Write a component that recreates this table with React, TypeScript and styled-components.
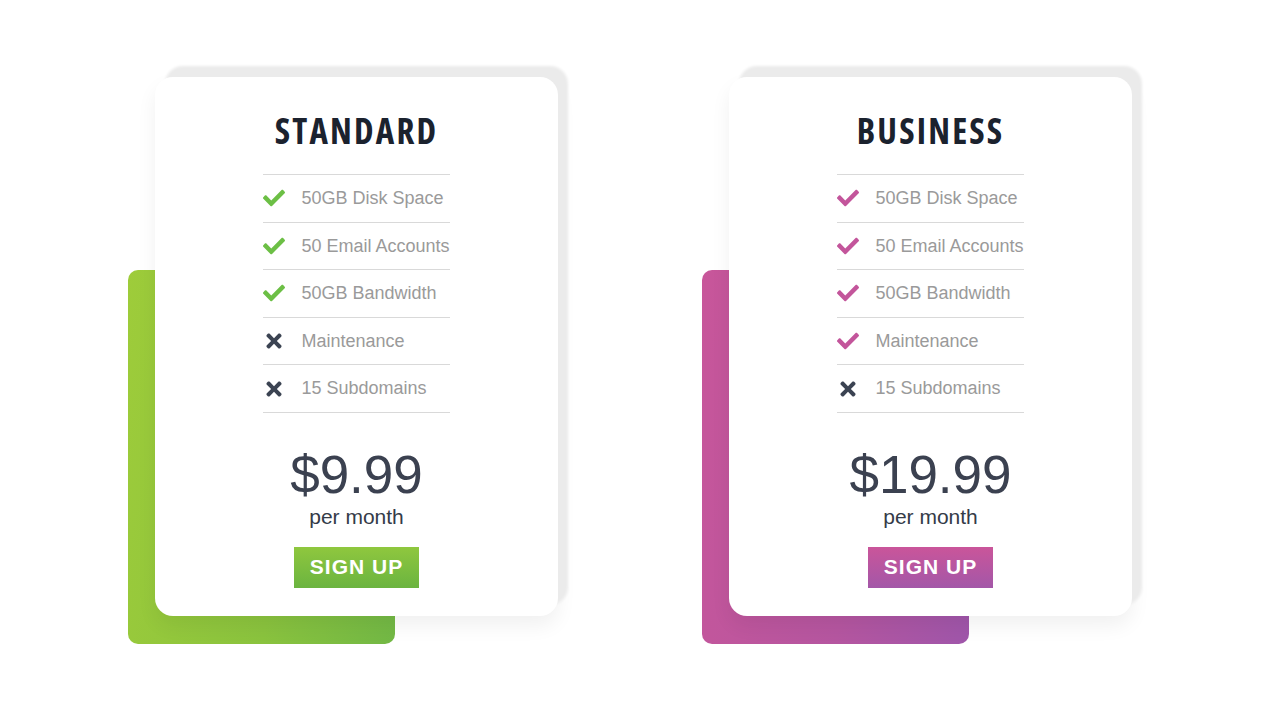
import React from 'react';
import styled, { createGlobalStyle } from 'styled-components';
import { FaCheck, FaTimes } from 'react-icons/fa';

type Theme = {
  accent: string;
  button: string;
  check: string;
};

const themes: Record<string, Theme> = {
  green: {
    accent: 'linear-gradient(100deg, #9ecc3a 0%, #8ac33e 60%, #72b845 100%)',
    button: 'linear-gradient(to bottom, #8fc73e, #6bb440)',
    check: '#6cbf45',
  },
  pink: {
    accent: 'linear-gradient(100deg, #c8569a 0%, #b556a0 60%, #9f56aa 100%)',
    button: 'linear-gradient(to bottom, #ca559a, #a357a8)',
    check: '#c3559b',
  },
};

const plans = [
  {
    name: 'STANDARD',
    price: '$9.99',
    theme: themes.green,
    features: [
      { label: '50GB Disk Space', on: true },
      { label: '50 Email Accounts', on: true },
      { label: '50GB Bandwidth', on: true },
      { label: 'Maintenance', on: false },
      { label: '15 Subdomains', on: false },
    ],
  },
  {
    name: 'BUSINESS',
    price: '$19.99',
    theme: themes.pink,
    features: [
      { label: '50GB Disk Space', on: true },
      { label: '50 Email Accounts', on: true },
      { label: '50GB Bandwidth', on: true },
      { label: 'Maintenance', on: true },
      { label: '15 Subdomains', on: false },
    ],
  },
];

const App = () => {
  return (
    <>
      <GlobalStyle />
      <Page>
        {plans.map((plan) => (
          <Plan key={plan.name}>
            <Accent $bg={plan.theme.accent} />
            <Card>
              <Title>{plan.name}</Title>
              <Features>
                {plan.features.map((f) => (
                  <Feature key={f.label}>
                    <Mark $color={f.on ? plan.theme.check : '#3b4352'}>
                      {f.on ? <FaCheck size={22} /> : <FaTimes size={22} />}
                    </Mark>
                    {f.label}
                  </Feature>
                ))}
              </Features>
              <Price>{plan.price}</Price>
              <Period>per month</Period>
              <SignUp $bg={plan.theme.button}>SIGN UP</SignUp>
            </Card>
          </Plan>
        ))}
      </Page>
    </>
  );
};

export default App;

const GlobalStyle = createGlobalStyle`
  html, body {
    margin: 0;
    background: #fff;
  }
  body {
    font-family: 'Liberation Sans', Arial, sans-serif;
  }
`;

const card = {
  width: 403,
  radius: 18,
};

const Page = styled.main`
  display: flex;
  align-items: flex-start;
  gap: 171px;

  width: 1280px;
  height: 720px;
  padding: 77px 0 0 155px;
  box-sizing: border-box;
`;

const Plan = styled.section`
  position: relative;
  isolation: isolate;

  width: ${card.width}px;
`;

const Accent = styled.div<{ $bg: string }>`
  position: absolute;
  left: -27px;
  top: 193px;
  z-index: -1;

  width: 267px;
  height: 374px;

  border-radius: 10px;
  background: ${(p) => p.$bg};
`;

const Card = styled.div`
  display: flex;
  flex-direction: column;
  align-items: center;

  padding: 34px 0 28px;

  border-radius: ${card.radius}px;
  background: #fff;
  box-shadow:
    10px -11px 3px #ebebeb,
    0 10px 20px rgba(0, 0, 0, 0.06);
`;

const Title = styled.h2`
  margin: 0 0 23px;

  font-family: 'Open Sans', 'Noto Sans', sans-serif;
  font-size: 35px;
  font-weight: 700;
  font-stretch: 80%;
  line-height: 40px;
  letter-spacing: 2.2px;

  color: #1b222e;
`;

const Features = styled.ul`
  margin: 0;
  padding: 0;

  list-style: none;
  border-top: 1px solid #d9d9d9;
`;

const Feature = styled.li`
  display: flex;
  align-items: center;

  padding: 12px 0;

  font-size: 18px;
  line-height: 22.6px;
  color: #9a9a9a;

  border-bottom: 1px solid #d9d9d9;
`;

const Mark = styled.span<{ $color: string }>`
  display: flex;
  align-items: center;

  width: 38px;

  color: ${(p) => p.$color};
`;

const Price = styled.div`
  margin-top: 37.5px;

  font-size: 53px;
  line-height: 50px;
  color: #3b4150;
`;

const Period = styled.div`
  margin-top: 5.5px;

  font-size: 21px;
  line-height: 21px;
  color: #343b48;
`;

const SignUp = styled.button<{ $bg: string }>`
  margin-top: 20px;
  height: 41px;
  padding: 0 16px;

  font-family: 'Liberation Sans', Arial, sans-serif;
  font-size: 21px;
  font-weight: 700;
  letter-spacing: 1px;
  color: #fff;

  border: none;
  background: ${(p) => p.$bg};
  cursor: pointer;
`;
